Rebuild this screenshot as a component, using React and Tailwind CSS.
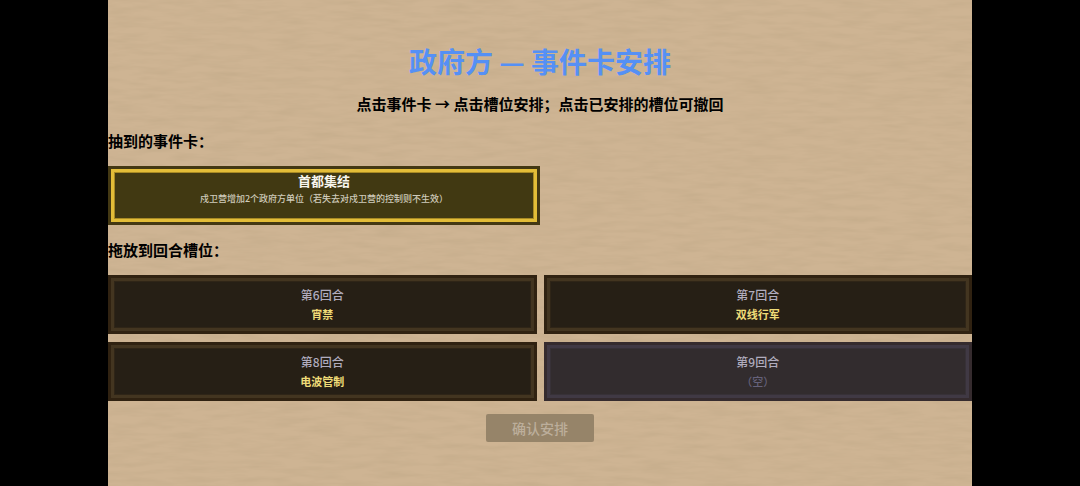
import { useState } from "react";

const ROUNDS = [6, 7, 8, 9];

const initialHand = [
  {
    id: "capital",
    name: "首都集结",
    desc: "戍卫营增加2个政府方单位（若失去对戍卫营的控制则不生效）",
  },
];

const initialSlots = {
  6: { id: "curfew", name: "宵禁", desc: "" },
  7: { id: "march", name: "双线行军", desc: "" },
  8: { id: "radio", name: "电波管制", desc: "" },
};

function PaperTexture() {
  return (
    <svg
      className="pointer-events-none absolute inset-0 h-full w-full"
      aria-hidden="true"
    >
      <filter id="grain" x="0" y="0" width="100%" height="100%">
        <feTurbulence
          type="fractalNoise"
          baseFrequency="0.03 0.18"
          numOctaves="3"
          seed="7"
        />
        <feColorMatrix values="0 0 0 0 0.45  0 0 0 0 0.34  0 0 0 0 0.2  0.5 0 0 0 -0.18" />
      </filter>
      <rect width="100%" height="100%" filter="url(#grain)" />
    </svg>
  );
}

function EventCard({ card, selected, onClick }) {
  return (
    <button
      onClick={onClick}
      className={`flex h-[59px] flex-col items-center border-3 pt-0.5 text-center inset-ring-4 ${
        selected
          ? "border-[#433813] bg-[#413912] inset-ring-[#a88a24] inset-shadow-[0_0_0_3px_#e3bd38]"
          : "border-[#2f2210] bg-[#272016] inset-ring-[#332816] inset-shadow-[0_0_0_3px_#453720]"
      }`}
    >
      <span className="text-[13px] leading-5 font-bold text-[#f8f6ee]">
        {card.name}
      </span>
      <span className="text-[9px] leading-4 font-medium text-[#cfcbbb]">
        {card.desc}
      </span>
    </button>
  );
}

function RoundSlot({ round, card, onClick }) {
  return (
    <button
      onClick={onClick}
      className={`flex h-[59px] flex-col items-center justify-center border-3 pb-0.5 text-center inset-ring-4 ${
        card
          ? "border-[#302211] bg-[#261f15] inset-ring-[#2f2517] inset-shadow-[0_0_0_3px_#433520]"
          : "border-[#352b2e] bg-[#322c2e] inset-ring-[#373137] inset-shadow-[0_0_0_3px_#403944]"
      }`}
    >
      <span className="text-[12px] leading-5 font-medium text-[#b0acbe]">
        第{round}回合
      </span>
      {card ? (
        <span className="text-[11px] leading-[18px] font-bold text-[#f0dc78]">
          {card.name}
        </span>
      ) : (
        <span className="text-[11px] leading-[18px] font-medium text-[#65617a]">
          （空）
        </span>
      )}
    </button>
  );
}

export default function App() {
  const [hand, setHand] = useState(initialHand);
  const [slots, setSlots] = useState(initialSlots);
  const [selectedId, setSelectedId] = useState("capital");

  const handleSlotClick = (round) => {
    const placed = slots[round];
    if (placed) {
      setSlots({ ...slots, [round]: null });
      setHand([...hand, placed]);
      return;
    }
    const card = hand.find((c) => c.id === selectedId);
    if (!card) return;
    setSlots({ ...slots, [round]: card });
    setHand(hand.filter((c) => c.id !== selectedId));
    setSelectedId(null);
  };

  return (
    <div className="min-h-screen bg-black px-[10%] font-['Noto_Sans_CJK_SC',sans-serif]">
      <main className="relative min-h-screen bg-[#ceb493]">
        <PaperTexture />
        <div className="relative flex flex-col gap-[13px] pt-[43px] pb-10">
          <h1 className="text-center text-[28px] leading-9 font-bold text-[#5590f5]">
            政府方 — 事件卡安排
          </h1>
          <p className="text-center text-[15px] leading-6 font-bold text-black">
            点击事件卡 → 点击槽位安排；点击已安排的槽位可撤回
          </p>

          <h2 className="text-[15px] leading-6 font-bold text-black">
            抽到的事件卡：
          </h2>
          <div className="grid grid-cols-2">
            {hand.map((c) => (
              <EventCard
                key={c.id}
                card={c}
                selected={c.id === selectedId}
                onClick={() => setSelectedId(c.id)}
              />
            ))}
          </div>

          <h2 className="text-[15px] leading-6 font-bold text-black">
            拖放到回合槽位：
          </h2>
          <div className="grid grid-cols-2 gap-x-[7px] gap-y-2">
            {ROUNDS.map((r) => (
              <RoundSlot
                key={r}
                round={r}
                card={slots[r]}
                onClick={() => handleSlotClick(r)}
              />
            ))}
          </div>

          <button
            disabled={hand.length > 0}
            className="self-center rounded-xs bg-[#4a4030] px-[26px] text-[14px] leading-7 font-medium text-white disabled:bg-[#968469] disabled:text-[#bcae9b]"
          >
            确认安排
          </button>
        </div>
      </main>
    </div>
  );
}
